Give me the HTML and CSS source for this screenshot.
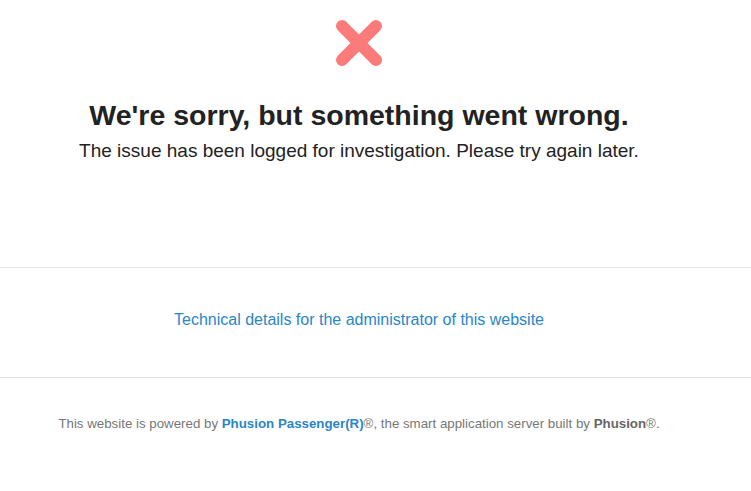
FILE: index.html
```html
<!DOCTYPE html>
<html>
<head>
<meta charset="utf-8">
<title>We're sorry, but something went wrong</title>
<link rel="stylesheet" href="styles.css">
</head>
<body>
<section class="top">
  <svg class="icon" width="48" height="48" viewBox="0 0 48 48" aria-hidden="true">
    <g stroke="#fb7a7a" stroke-width="12" stroke-linecap="round">
      <line x1="7" y1="7" x2="41" y2="41"/>
      <line x1="41" y1="7" x2="7" y2="41"/>
    </g>
  </svg>
  <h1 class="title">We're sorry, but something went wrong.</h1>
  <p class="lead">The issue has been logged for investigation. Please try again later.</p>
</section>
<section class="details">
  <a class="details-link" href="#">Technical details for the administrator of this website</a>
</section>
<footer class="footer">
  This website is powered by <a class="brand" href="#">Phusion Passenger(R)</a>®, the smart application server built by <b class="phusion">Phusion</b>®.
</footer>
</body>
</html>
```
FILE: styles.css
```css
html, body {
  margin: 0;
  padding: 0;
  background: #fff;
}
body {
  font-family: "Liberation Sans", Arial, sans-serif;
  color: #222;
}
.top {
  display: flex;
  flex-direction: column;
  align-items: center;
  padding: 19px 33px 0 0;
  height: 268px;
  box-sizing: border-box;
  border-bottom: 1px solid #e2e2e2;
}
.icon {
  display: block;
}
.title {
  margin: 30px 0 0;
  font-size: 28.5px;
  line-height: 36px;
  font-weight: bold;
  color: #222;
}
.lead {
  margin: 6px 0 0;
  font-size: 19px;
  line-height: 24px;
  color: #222;
}
.details {
  height: 110px;
  display: flex;
  align-items: center;
  justify-content: center;
  padding: 0 33px 6px 0;
  box-sizing: border-box;
  border-bottom: 1px solid #e2e2e2;
}
.details-link {
  color: #2a86c8;
  text-decoration: none;
  font-size: 16px;
  line-height: 20px;
}
.footer {
  text-align: center;
  padding: 38px 33px 0 0;
  font-size: 13.3px;
  line-height: 16px;
  color: #777;
}
.brand {
  color: #2a86c8;
  font-weight: bold;
  text-decoration: none;
}
.phusion {
  color: #666;
}
```
